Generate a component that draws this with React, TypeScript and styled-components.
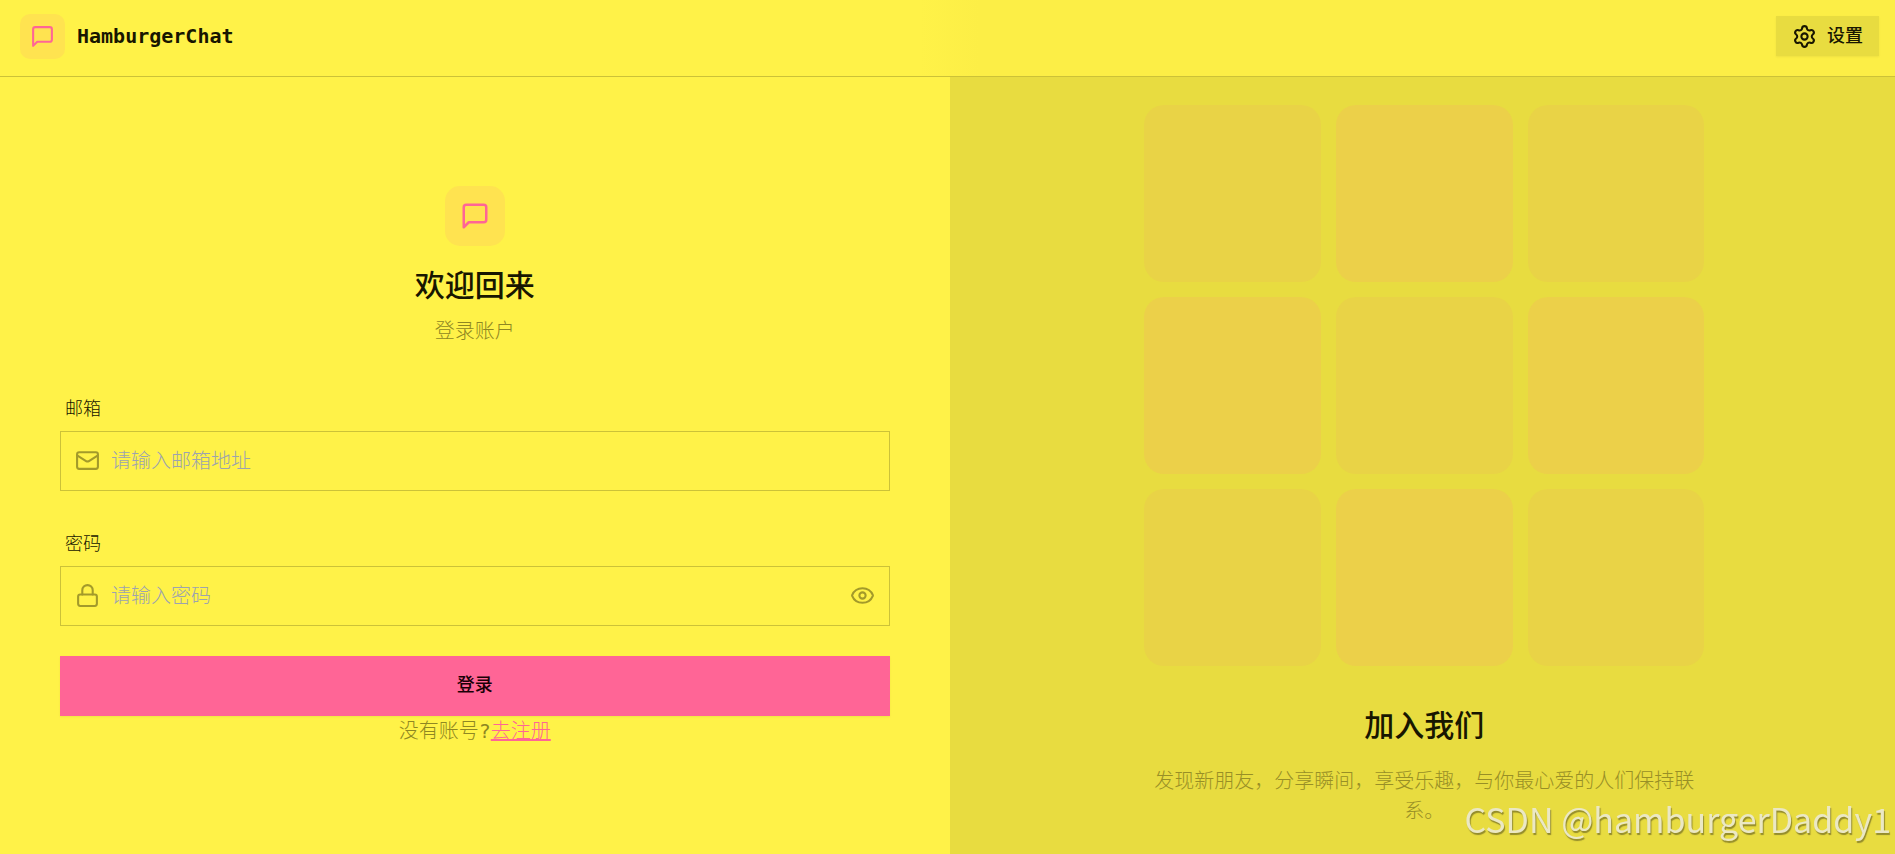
import React from "react";
import styled, { createGlobalStyle } from "styled-components";
import { Eye, Lock, Mail, Settings } from "lucide-react";

const c = {
  base: "#fff248",
  panel: "#e8dc40",
  header: "#fcee46",
  line: "#ccc238",
  ink: "#181600",
  pink: "#ff6596",
};

const mono = `"DejaVu Sans Mono", "Noto Sans CJK SC", monospace`;

const GlobalStyle = createGlobalStyle`
  *, *::before, *::after { box-sizing: border-box; }
  html { overflow-x: hidden; background: ${c.base}; }
  body {
    margin: 0;
    overflow-x: hidden;
    color: ${c.ink};
    font-family: ${mono};
    font-size: 20px;
    line-height: 30px;
  }
  h1, h2, p { margin: 0; }
`;

const Page = styled.div`
  display: flex;
  flex-direction: column;
  min-height: 100vh;
  margin-right: -4px;
`;

const Header = styled.header`
  display: flex;
  align-items: center;
  justify-content: space-between;
  height: 77px;
  padding: 0 20px 4px;
  border-bottom: 1px solid ${c.line};
  background: linear-gradient(
    to right,
    ${c.base} calc(50% - 30px),
    ${c.header} calc(50% + 30px)
  );
`;

const Brand = styled.a`
  display: flex;
  align-items: center;
  gap: 12px;
  color: inherit;
  text-decoration: none;
`;

const BrandName = styled.h1`
  font-size: 20px;
  line-height: 30px;
  font-weight: 700;
`;

const LogoTile = styled.span<{ $size: number; $radius: number }>`
  display: flex;
  align-items: center;
  justify-content: center;
  width: ${(p) => p.$size}px;
  height: ${(p) => p.$size}px;
  border-radius: ${(p) => p.$radius}px;
  background: #ffe350;
  color: ${c.pink};
`;

const SettingsButton = styled.button`
  display: flex;
  align-items: center;
  gap: 10px;
  height: 40px;
  padding: 0 16px;
  border: 0;
  background: ${c.panel};
  box-shadow: 0 1px 2px rgba(0, 0, 0, 0.06);
  color: ${c.ink};
  font-family: inherit;
  font-size: 18px;
  font-weight: 500;
  line-height: 20px;
  cursor: pointer;
`;

const Main = styled.main`
  flex: 1;
  display: grid;
  grid-template-columns: 1fr 1fr;
`;

const Pane = styled.section<{ $tinted?: boolean }>`
  display: flex;
  flex-direction: column;
  align-items: center;
  justify-content: center;
  padding: 27px 60px;
  background: ${(p) => (p.$tinted ? c.panel : c.base)};
`;

const Intro = styled.div`
  display: flex;
  flex-direction: column;
  align-items: center;
  margin-bottom: 40px;
`;

const Title = styled.h2`
  margin: 20px 0 10px;
  font-size: 30px;
  line-height: 40px;
  font-weight: 500;
`;

const Muted = styled.p`
  color: #8f8722;
  font-weight: 300;
  text-align: center;
`;

const Form = styled.form`
  display: flex;
  flex-direction: column;
  gap: 30px;
  width: 100%;
`;

const Label = styled.label`
  display: block;
  padding: 10px 5px;
  font-size: 18px;
  font-weight: 300;
  line-height: 25px;
`;

const Field = styled.div`
  display: flex;
  align-items: center;
  gap: 11px;
  height: 60px;
  padding: 0 14px;
  border: 1px solid ${c.line};
  color: #a39a2a;
`;

const Input = styled.input`
  flex: 1;
  min-width: 0;
  padding: 0;
  border: 0;
  outline: 0;
  background: transparent;
  color: ${c.ink};
  font-family: inherit;
  font-size: 20px;
  font-weight: 300;
  line-height: 30px;
  &::placeholder {
    color: #9ca3af;
    opacity: 1;
  }
`;

const IconButton = styled.button`
  display: flex;
  padding: 0;
  border: 0;
  background: none;
  color: inherit;
  cursor: pointer;
`;

const SubmitButton = styled.button`
  height: 60px;
  padding: 0 0 5px;
  border: 0;
  background: ${c.pink};
  box-shadow: 0 1px 2px rgba(0, 0, 0, 0.06);
  color: #180006;
  font-family: inherit;
  font-size: 18px;
  font-weight: 500;
  cursor: pointer;
`;

const SignupLink = styled.a`
  color: ${c.pink};
  text-decoration: underline;
  text-decoration-thickness: 2px;
`;

const Showcase = styled.div`
  width: 100%;
  max-width: 560px;
  text-align: center;
`;

const Tiles = styled.div`
  display: grid;
  grid-template-columns: repeat(3, 1fr);
  gap: 15px;
  margin-bottom: 40px;
`;

const Tile = styled.div<{ $strong: boolean }>`
  aspect-ratio: 1;
  border-radius: 20px;
  background: ${(p) => (p.$strong ? "#ecd049" : "#e9d346")};
`;

const ShowcaseTitle = styled(Title)`
  margin: 0 0 20px;
`;

const ShowcaseText = styled(Muted)`
  color: #988f26;
`;

const Watermark = styled.div`
  position: fixed;
  right: 4px;
  bottom: 17px;
  color: #ebe8c4;
  font-family: "Noto Sans CJK SC", sans-serif;
  font-size: 34px;
  font-weight: 400;
  line-height: 36px;
  text-shadow: 1px 2px 1px rgba(90, 85, 30, 0.6);
  pointer-events: none;
`;

function ChatIcon({ size }: { size: number }) {
  return (
    <svg
      width={size}
      height={size}
      viewBox="0 0 24 24"
      fill="none"
      stroke="currentColor"
      strokeWidth="2"
      strokeLinecap="round"
      strokeLinejoin="round"
      aria-hidden="true"
    >
      <path d="M21 15a2 2 0 0 1-2 2H7l-4 4V5a2 2 0 0 1 2-2h14a2 2 0 0 1 2 2z" />
    </svg>
  );
}

export default function App() {
  const [visible, setVisible] = React.useState(false);
  return (
    <>
      <GlobalStyle />
      <Page>
        <Header>
          <Brand href="#">
            <LogoTile $size={45} $radius={10}>
              <ChatIcon size={25} />
            </LogoTile>
            <BrandName>HamburgerChat</BrandName>
          </Brand>
          <SettingsButton type="button">
            <Settings size={25} />
            设置
          </SettingsButton>
        </Header>
        <Main>
          <Pane>
            <Intro>
              <LogoTile $size={60} $radius={15}>
                <ChatIcon size={30} />
              </LogoTile>
              <Title>欢迎回来</Title>
              <Muted>登录账户</Muted>
            </Intro>
            <Form onSubmit={(e) => e.preventDefault()}>
              <div>
                <Label htmlFor="email">邮箱</Label>
                <Field>
                  <Mail size={25} />
                  <Input id="email" type="email" placeholder="请输入邮箱地址" />
                </Field>
              </div>
              <div>
                <Label htmlFor="password">密码</Label>
                <Field>
                  <Lock size={25} />
                  <Input
                    id="password"
                    type={visible ? "text" : "password"}
                    placeholder="请输入密码"
                  />
                  <IconButton
                    type="button"
                    aria-label="显示密码"
                    onClick={() => setVisible(!visible)}
                  >
                    <Eye size={25} />
                  </IconButton>
                </Field>
              </div>
              <SubmitButton type="submit">登录</SubmitButton>
            </Form>
            <Muted>
              没有账号?<SignupLink href="#">去注册</SignupLink>
            </Muted>
          </Pane>
          <Pane $tinted>
            <Showcase>
              <Tiles>
                {Array.from({ length: 9 }, (_, i) => (
                  <Tile key={i} $strong={i % 2 === 1} />
                ))}
              </Tiles>
              <ShowcaseTitle>加入我们</ShowcaseTitle>
              <ShowcaseText>
                发现新朋友，分享瞬间，享受乐趣，与你最心爱的人们保持联系。
              </ShowcaseText>
            </Showcase>
          </Pane>
        </Main>
      </Page>
      <Watermark>CSDN @hamburgerDaddy1</Watermark>
    </>
  );
}
